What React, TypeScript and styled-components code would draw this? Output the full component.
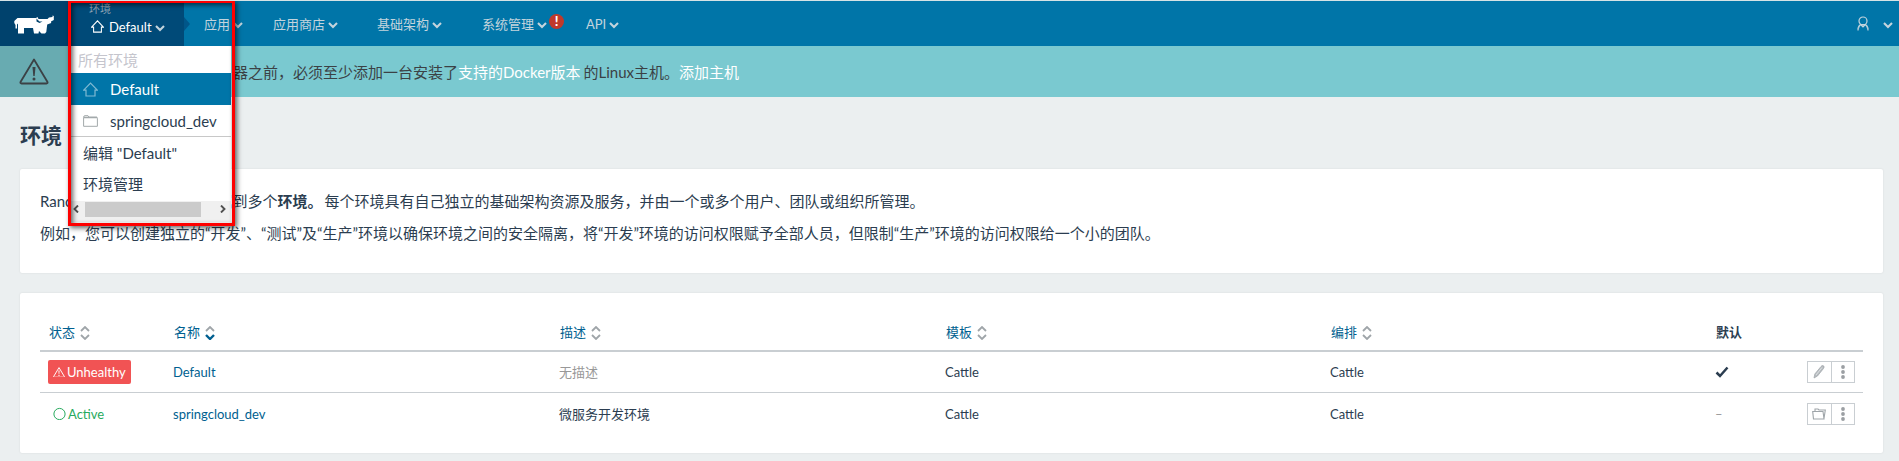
import React from "react";
import styled, { createGlobalStyle } from "styled-components";

const GlobalStyle = createGlobalStyle`
  * { box-sizing: border-box; }
  body {
    margin: 0;
    overflow: hidden;
    background: #ebeff0;
    color: #2b3d50;
    font: 15px/20px Lato, "Noto Sans CJK SC", sans-serif;
  }
  p, h1 { margin: 0; }
  svg { display: block; flex: none; }
`;

const Page = styled.div`
  position: relative;
  height: 461px;
  overflow: hidden;
  border-top: 1px solid #d5e3e6;
`;

const Header = styled.header`
  display: flex;
  height: 45px;
  background: #0075a8;
  color: #c3d4dd;
  font-size: 13px;
`;

const Logo = styled.div`
  display: flex;
  width: 71px;
  padding: 14px 0 0 14px;
  background: #00426d;
`;

const Project = styled.div`
  width: 113px;
  padding: 1px 0 0 18px;
  background: #004a78;
`;

const ProjectLabel = styled.div`
  height: 15px;
  line-height: 14px;
  font-size: 11px;
  color: #8da3b4;
`;

const ProjectName = styled.div`
  display: flex;
  align-items: center;
  gap: 5px;
  height: 19px;
  margin-left: 2px;
  color: #fff;
  & > svg:last-child {
    margin-left: -2px;
  }
`;

const Notch = styled.svg`
  margin-top: 16px;
`;

const Nav = styled.nav`
  display: flex;
  flex: 1;
  padding-left: 14px;
`;

const NavItem = styled.div<{ $width: number }>`
  display: flex;
  align-items: center;
  gap: 3px;
  width: ${(p) => p.$width}px;
  height: 46px;
`;

const Alert = styled.span`
  width: 15px;
  height: 15px;
  margin: -5px 0 0 -1px;
  border-radius: 50%;
  background: #c0392b;
  color: #fff;
  font-weight: 900;
  font-size: 13px;
  line-height: 15px;
  text-align: center;
`;

const UserMenu = styled.div`
  display: flex;
  align-items: center;
  gap: 14px;
  padding-right: 6px;
`;

const Banner = styled.div`
  display: flex;
  height: 51px;
  background: #7ac9d0;
  color: #3b4145;
`;

const BannerIcon = styled.div`
  display: flex;
  align-items: center;
  width: 71px;
  padding-left: 19px;
  background: #68abb1;
`;

const BannerText = styled.p`
  padding-left: 162px;
  line-height: 53px;
  white-space: nowrap;
`;

const BannerLink = styled.a`
  color: #fff;
  margin-right: 3px;
`;

const Title = styled.h1`
  height: 72px;
  padding-left: 20px;
  font-size: 21px;
  line-height: 76px;
  font-weight: 700;
`;

const Panel = styled.section`
  margin: 0 16px 20px 20px;
  padding: 16px 20px 0;
  background: #fff;
  border-radius: 2px;
  box-shadow: 0 0 2px rgba(0, 0, 0, 0.1);
`;

const Intro = styled(Panel)`
  height: 104px;
  line-height: 32px;
  white-space: nowrap;
`;

const Term = styled.b`
  margin-right: -2px;
`;

const TablePanel = styled(Panel)`
  height: 160px;
  padding-top: 21px;
`;

const Row = styled.div<{ $kind?: "head" | "last" }>`
  display: grid;
  grid-template-columns: 125px 386px 386px 385px 385px 92px 48px;
  align-items: center;
  height: ${(p) => (p.$kind === "head" ? 38 : 41)}px;
  padding-left: 8px;
  border-bottom: ${(p) =>
    p.$kind === "head" ? "2px solid #c9ced2" : p.$kind === "last" ? "0" : "1px solid #c9ced2"};
  font-size: 13px;
`;

const HeadCell = styled.div<{ $plain?: boolean }>`
  display: flex;
  align-items: center;
  gap: 5px;
  padding-left: 1px;
  color: ${(p) => (p.$plain ? "#2b3d50" : "#005f90")};
  font-weight: ${(p) => (p.$plain ? 700 : 400)};
`;

const Cell = styled.div<{ $tone?: "link" | "muted" }>`
  color: ${(p) => (p.$tone === "link" ? "#005f90" : p.$tone === "muted" ? "#989898" : "#2b3d50")};
`;

const State = styled.span<{ $bad?: boolean }>`
  display: inline-flex;
  align-items: center;
  gap: 2px;
  height: 24px;
  padding: 0 5px;
  border-radius: 2px;
  background: ${(p) => (p.$bad ? "#f15354" : "transparent")};
  color: ${(p) => (p.$bad ? "#fff" : "#27aa5e")};
`;

const Actions = styled.div`
  display: flex;
  height: 22px;
  border: 1px solid #c9ced2;
`;

const ActionButton = styled.div`
  display: flex;
  flex: 1;
  align-items: center;
  justify-content: center;
  & + & {
    border-left: 1px solid #c9ced2;
  }
`;

const Menu = styled.div`
  position: absolute;
  top: 45px;
  left: 71px;
  width: 160px;
  height: 176px;
  background: #fff;
`;

const MenuTitle = styled.div`
  height: 27px;
  padding-left: 7px;
  line-height: 28px;
  color: #c5c5cd;
`;

const MenuItem = styled.div<{ $active?: boolean; $height: number }>`
  display: flex;
  align-items: center;
  gap: 12px;
  height: ${(p) => p.$height}px;
  padding-left: 12px;
  white-space: nowrap;
  background: ${(p) => (p.$active ? "#0075a8" : "transparent")};
  color: ${(p) => (p.$active ? "#fff" : "#2b3d50")};
`;

const Divider = styled.div`
  height: 1px;
  background: #c8c8c8;
`;

const Scrollbar = styled.div`
  display: flex;
  align-items: center;
  justify-content: space-between;
  height: 21px;
  margin-top: 2px;
  padding: 0 5px 5px 2px;
  background: #f0f0f0;
`;

const Thumb = styled.div`
  width: 116px;
  height: 15px;
  margin-right: 13px;
  background: #cbcbcb;
`;

const Marker = styled.div`
  position: absolute;
  top: -1px;
  left: 68px;
  width: 167px;
  height: 226px;
  border: 3px solid #fe0000;
  box-shadow: 2px 2px 5px rgba(0, 0, 0, 0.6), inset 2px 2px 5px rgba(0, 0, 0, 0.6);
`;

const ChevronIcon = styled.svg`
  margin-top: 2px;
`;

const Chevron = () => (
  <ChevronIcon width="10" height="8" viewBox="0 0 10 8">
    <path d="M1 2l4 4 4-4" fill="none" stroke="#c3d4dd" strokeWidth="2.1" />
  </ChevronIcon>
);

const Home = ({ size, color }: { size: number; color: string }) => (
  <svg width={size} height={size} viewBox="0 0 15 15">
    <path d="M.7 8.2L7.5 1l6.8 7.2H12V14H3V8.2z" fill="none" stroke={color} strokeWidth="1.2" />
  </svg>
);

const Folder = () => (
  <svg width="15" height="12" viewBox="0 0 15 12">
    <path d="M.6 11V2.2Q.6.7 2 .7H5L6 2.2H13.5Q14.4 2.2 14.4 3.2V11.3H.6z" fill="none" stroke="#a3a9ab" />
    <path d="M1 2.5H14" stroke="#a3a9ab" strokeWidth="1.5" />
  </svg>
);

const Warning = ({ size, color, width }: { size: number; color: string; width: number }) => (
  <svg width={size} height={size * 0.9} viewBox="0 0 30 27">
    <path d="M15 1.5L28.5 24Q29 25.5 27.5 25.5H2.5Q1 25.5 1.5 24z" fill="none" stroke={color} strokeWidth={width} strokeLinejoin="round" />
    <path d="M13.5 9h3l-.8 9h-1.4z" fill={color} />
    <circle cx="15" cy="21" r="1.5" fill={color} />
  </svg>
);

const SortIcon = styled.svg`
  margin-top: 2px;
`;

const Sort = ({ down }: { down?: boolean }) => (
  <SortIcon width="10" height="14" viewBox="0 0 10 14">
    <path d="M1 5l4-4 4 4" fill="none" stroke="#9fa5a9" strokeWidth="1.8" />
    <path d="M1 9l4 4 4-4" fill="none" stroke={down ? "#005f90" : "#9fa5a9"} strokeWidth={down ? 2.4 : 1.8} />
  </SortIcon>
);

const Bull = () => (
  <svg width="40" height="20" viewBox="0 0 40 20">
    <path
      d="M3.5 3H22l1.5-1 1 2h9l1.5-1.5L38.5 2V.5L39.8 1v4L37 6.5l.2 1.5-4 1.5-.9 7.5-1.3 1.5h-3.5L25 16l-.5 2.5H20L19 13H10v5.5H4V9.5L3 8.5v5H1.5V10L.3 8V6z"
      fill="#fff"
    />
    <path d="M22.5 3.5l3 3h3l-3 1.5-3-1.5z" fill="#00426d" />
  </svg>
);

const User = () => (
  <svg width="12" height="15" viewBox="0 0 12 15">
    <circle cx="6" cy="5" r="4" fill="none" stroke="#c3d4dd" strokeWidth="1.2" />
    <path d="M1 14.5V12Q1.5 9.5 4 8.5M11 14.5V12Q10.5 9.5 8 8.5M3.5 8.5L6 11l2.5-2.5z" fill="#8cb9cd" stroke="#c3d4dd" strokeWidth="1.1" />
  </svg>
);

const Pencil = () => (
  <svg width="12" height="14" viewBox="0 0 12 14">
    <path d="M1 13l.8-4L8 1.5Q9-.2 10.5.8 11.8 1.8 10.5 3.5L4.5 11z" fill="#b7bcc0" stroke="#9fa5a9" strokeWidth=".7" />
    <path d="M3 10l6-7.5" stroke="#e6e8ea" strokeWidth=".8" />
  </svg>
);

const FolderOpen = () => (
  <svg width="14" height="12" viewBox="0 0 14 12">
    <path d="M.7 3.5H11L12 11H1.5zM3 3V1H6L7 2H13.3L12 10.5" fill="none" stroke="#9fa5a9" strokeWidth="1.1" />
  </svg>
);

const Dots = () => (
  <svg width="4" height="16" viewBox="0 0 4 16">
    <circle cx="2" cy="3" r="1.9" fill="#9b9fa3" />
    <circle cx="2" cy="8" r="1.9" fill="#9b9fa3" />
    <circle cx="2" cy="13" r="1.9" fill="#9b9fa3" />
  </svg>
);

const Arrow = ({ flip }: { flip?: boolean }) => (
  <svg width="6" height="8" viewBox="0 0 6 8">
    <path d={flip ? "M1 .5L4.5 4 1 7.5" : "M5 .5L1.5 4 5 7.5"} fill="none" stroke="#505050" strokeWidth="1.9" />
  </svg>
);

const navItems = [
  { label: "应用", width: 69 },
  { label: "应用商店", width: 104 },
  { label: "基础架构", width: 105 },
  { label: "系统管理", width: 104, alert: true },
  { label: "API", width: 60 },
];

export default function App() {
  return (
    <>
      <GlobalStyle />
      <Page>
        <Header>
          <Logo><Bull /></Logo>
          <Project>
            <ProjectLabel>环境</ProjectLabel>
            <ProjectName>
              <Home size={13} color="#fff" />
              <span>Default</span>
              <Chevron />
            </ProjectName>
          </Project>
          <Notch width="6" height="14" viewBox="0 0 6 14">
            <path d="M0 0L6 7L0 14z" fill="#005689" />
          </Notch>
          <Nav>
            {navItems.map((item) => (
              <NavItem key={item.label} $width={item.width}>
                <span>{item.label}</span>
                <Chevron />
                {item.alert && <Alert>!</Alert>}
              </NavItem>
            ))}
          </Nav>
          <UserMenu><User /><Chevron /></UserMenu>
        </Header>

        <Banner>
          <BannerIcon><Warning size={30} color="#3b4145" width={1.8} /></BannerIcon>
          <BannerText>
            器之前，必须至少添加一台安装了<BannerLink>支持的Docker版本</BannerLink>的Linux主机。<BannerLink>添加主机</BannerLink>
          </BannerText>
        </Banner>

        <Title>环境</Title>

        <Intro>
          <p>Rancher 支持将资源分组归属到多个<Term>环境。</Term> 每个环境具有自己独立的基础架构资源及服务，并由一个或多个用户、团队或组织所管理。</p>
          <p>例如，您可以创建独立的“开发”、“测试”及“生产”环境以确保环境之间的安全隔离，将“开发”环境的访问权限赋予全部人员，但限制“生产”环境的访问权限给一个小的团队。</p>
        </Intro>

        <TablePanel>
          <Row $kind="head">
            <HeadCell>状态<Sort /></HeadCell>
            <HeadCell>名称<Sort down /></HeadCell>
            <HeadCell>描述<Sort /></HeadCell>
            <HeadCell>模板<Sort /></HeadCell>
            <HeadCell>编排<Sort /></HeadCell>
            <HeadCell $plain>默认</HeadCell>
          </Row>
          <Row>
            <Cell><State $bad><Warning size={12} color="#fff" width={2.4} />Unhealthy</State></Cell>
            <Cell $tone="link">Default</Cell>
            <Cell $tone="muted">无描述</Cell>
            <Cell>Cattle</Cell>
            <Cell>Cattle</Cell>
            <Cell>
              <svg width="14" height="12" viewBox="0 0 14 12">
                <path d="M1.5 6.5L5 10l7.5-8.5" fill="none" stroke="#2b3d50" strokeWidth="2.5" />
              </svg>
            </Cell>
            <Actions>
              <ActionButton><Pencil /></ActionButton>
              <ActionButton><Dots /></ActionButton>
            </Actions>
          </Row>
          <Row $kind="last">
            <Cell>
              <State>
                <svg width="13" height="13" viewBox="0 0 13 13">
                  <circle cx="6.5" cy="7" r="5.6" fill="none" stroke="#27aa5e" />
                </svg>
                Active
              </State>
            </Cell>
            <Cell $tone="link">springcloud_dev</Cell>
            <Cell>微服务开发环境</Cell>
            <Cell>Cattle</Cell>
            <Cell>Cattle</Cell>
            <Cell $tone="muted">–</Cell>
            <Actions>
              <ActionButton><FolderOpen /></ActionButton>
              <ActionButton><Dots /></ActionButton>
            </Actions>
          </Row>
        </TablePanel>

        <Menu>
          <MenuTitle>所有环境</MenuTitle>
          <MenuItem $active $height={32}><Home size={15} color="#7fbad3" />Default</MenuItem>
          <MenuItem $height={31}><Folder />springcloud_dev</MenuItem>
          <Divider />
          <MenuItem $height={32}>编辑 "Default"</MenuItem>
          <MenuItem $height={30}>环境管理</MenuItem>
          <Scrollbar><Arrow /><Thumb /><Arrow flip /></Scrollbar>
        </Menu>
        <Marker />
      </Page>
    </>
  );
}
